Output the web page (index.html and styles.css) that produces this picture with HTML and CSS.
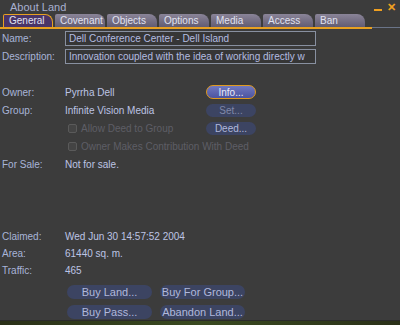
FILE: index.html
```html
<!DOCTYPE html>
<html lang="en">
<head>
  <meta charset="UTF-8">
  <title>About Land</title>
  <link rel="stylesheet" href="styles.css">
</head>
<body>
  <div class="janela">
    <div class="titulo">
      <span class="titulo-texto">About Land</span>
      <span class="controles"><span class="min"></span><span class="fechar">✕</span></span>
    </div>

    <div class="abas-linha">
      <div class="abas">
        <div class="aba ativa">General</div>
        <div class="aba">Covenant</div>
        <div class="aba">Objects</div>
        <div class="aba">Options</div>
        <div class="aba">Media</div>
        <div class="aba">Access</div>
        <div class="aba">Ban</div>
      </div>
      <div class="abas-resto"></div>
    </div>

    <div class="conteudo">
      <div class="linha campo">
        <span class="rotulo">Name:</span>
        <div class="entrada">Dell Conference Center - Dell Island</div>
      </div>
      <div class="linha campo">
        <span class="rotulo">Description:</span>
        <div class="entrada">Innovation coupled with the idea of working directly w</div>
      </div>

      <div class="linha dono">
        <span class="rotulo">Owner:</span>
        <span class="valor">Pyrrha Dell</span>
        <button class="botao foco">Info...</button>
      </div>
      <div class="linha">
        <span class="rotulo">Group:</span>
        <span class="valor">Infinite Vision Media</span>
        <button class="botao inativo">Set...</button>
      </div>
      <div class="linha">
        <span class="rotulo"></span>
        <span class="valor apagado"><span class="caixa"></span>Allow Deed to Group</span>
        <button class="botao">Deed...</button>
      </div>
      <div class="linha">
        <span class="rotulo"></span>
        <span class="valor apagado longo"><span class="caixa"></span>Owner Makes Contribution With Deed</span>
      </div>

      <div class="linha venda">
        <span class="rotulo">For Sale:</span>
        <span class="valor">Not for sale.</span>
      </div>

      <div class="linha info">
        <span class="rotulo">Claimed:</span>
        <span class="valor">Wed Jun 30 14:57:52 2004</span>
      </div>
      <div class="linha info">
        <span class="rotulo">Area:</span>
        <span class="valor">61440 sq. m.</span>
      </div>
      <div class="linha info">
        <span class="rotulo">Traffic:</span>
        <span class="valor">465</span>
      </div>

      <div class="acoes">
        <button class="botao largo">Buy Land...</button>
        <button class="botao largo">Buy For Group...</button>
        <button class="botao largo">Buy Pass...</button>
        <button class="botao largo">Abandon Land...</button>
      </div>
    </div>
  </div>
  <div class="chao"></div>
</body>
</html>
```

FILE: styles.css
```css
* {
  box-sizing: border-box;
}

body {
  margin: 0;
  width: 400px;
  height: 325px;
  overflow: hidden;
  background: #1c1f14;
  font-family: 'Liberation Sans', Arial, sans-serif;
  font-size: 10px;
  color: #b4bcdc;
}

.janela {
  height: 321px;
  background: #3c3c3c;
  border-bottom: 1px solid #2a2a2a;
}

.titulo {
  display: flex;
  justify-content: space-between;
  align-items: center;
  height: 14px;
  padding: 0 4px 0 10px;
}

.titulo-texto {
  font-size: 11px;
  color: #a8b0d0;
}

.controles {
  display: flex;
  align-items: center;
  gap: 5px;
  color: #f0a020;
}

.min {
  width: 8px;
  height: 2px;
  background: #f0a020;
  margin-top: 5px;
}

.fechar {
  font-size: 11px;
  font-weight: bold;
}

.abas-linha {
  display: flex;
  align-items: flex-end;
}

.abas {
  display: flex;
  gap: 2px;
  padding-left: 3px;
  height: 15px;
  border-bottom: 2px solid #e8a020;
  width: 372px;
}

.abas-resto {
  flex: 1;
  height: 1px;
  margin-bottom: 1px;
  background: #6a7488;
}

.aba {
  width: 50px;
  height: 13px;
  padding-left: 5px;
  line-height: 13px;
  background: linear-gradient(#8a8498, #625c72);
  color: #e0e2f0;
  border-radius: 2px 8px 0 0;
}

.aba.ativa {
  background: #4a3468;
  border: 1px solid #e8a020;
  border-bottom: none;
  line-height: 12px;
}

.conteudo {
  padding: 0 0 0 2px;
}

.linha {
  display: flex;
  align-items: center;
  height: 18px;
}

.rotulo {
  width: 63px;
  flex-shrink: 0;
  color: #a8b4d8;
}

.entrada {
  width: 251px;
  height: 15px;
  line-height: 13px;
  padding-left: 3px;
  border: 1px solid #8890a0;
  background: #363636;
  color: #b4bce0;
  white-space: nowrap;
  overflow: hidden;
}

.dono {
  margin-top: 18px;
}

.valor {
  width: 141px;
  flex-shrink: 0;
  display: flex;
  align-items: center;
  color: #bcc4e4;
  white-space: nowrap;
}

.valor.longo {
  width: auto;
}

.apagado {
  color: #5e5e66;
}

.caixa {
  width: 9px;
  height: 9px;
  flex-shrink: 0;
  border: 1px solid #5a5a5a;
  border-radius: 2px;
  margin: 0 4px 0 3px;
  background: #444;
}

.botao {
  font-family: inherit;
  font-size: 10px;
  width: 50px;
  height: 13px;
  padding: 0;
  border: none;
  border-radius: 7px;
  background: #3c4462;
  color: #b0b8dc;
}

.botao.foco {
  height: 14px;
  background: linear-gradient(#7078c0, #4c54a0);
  border: 1px solid #e09a20;
  color: #e8eaf8;
}

.botao.inativo {
  color: #8088a8;
}

.venda {
  margin-bottom: 55px;
}

.info {
  height: 17px;
}

.acoes {
  display: grid;
  grid-template-columns: 85px 85px;
  column-gap: 8px;
  row-gap: 6px;
  margin: 6px 0 0 65px;
}

.botao.largo {
  width: 85px;
  height: 14px;
  font-size: 11px;
}

.chao {
  height: 4px;
  background: linear-gradient(90deg, #2a3018, #3a4a20, #2a3018);
}
```
